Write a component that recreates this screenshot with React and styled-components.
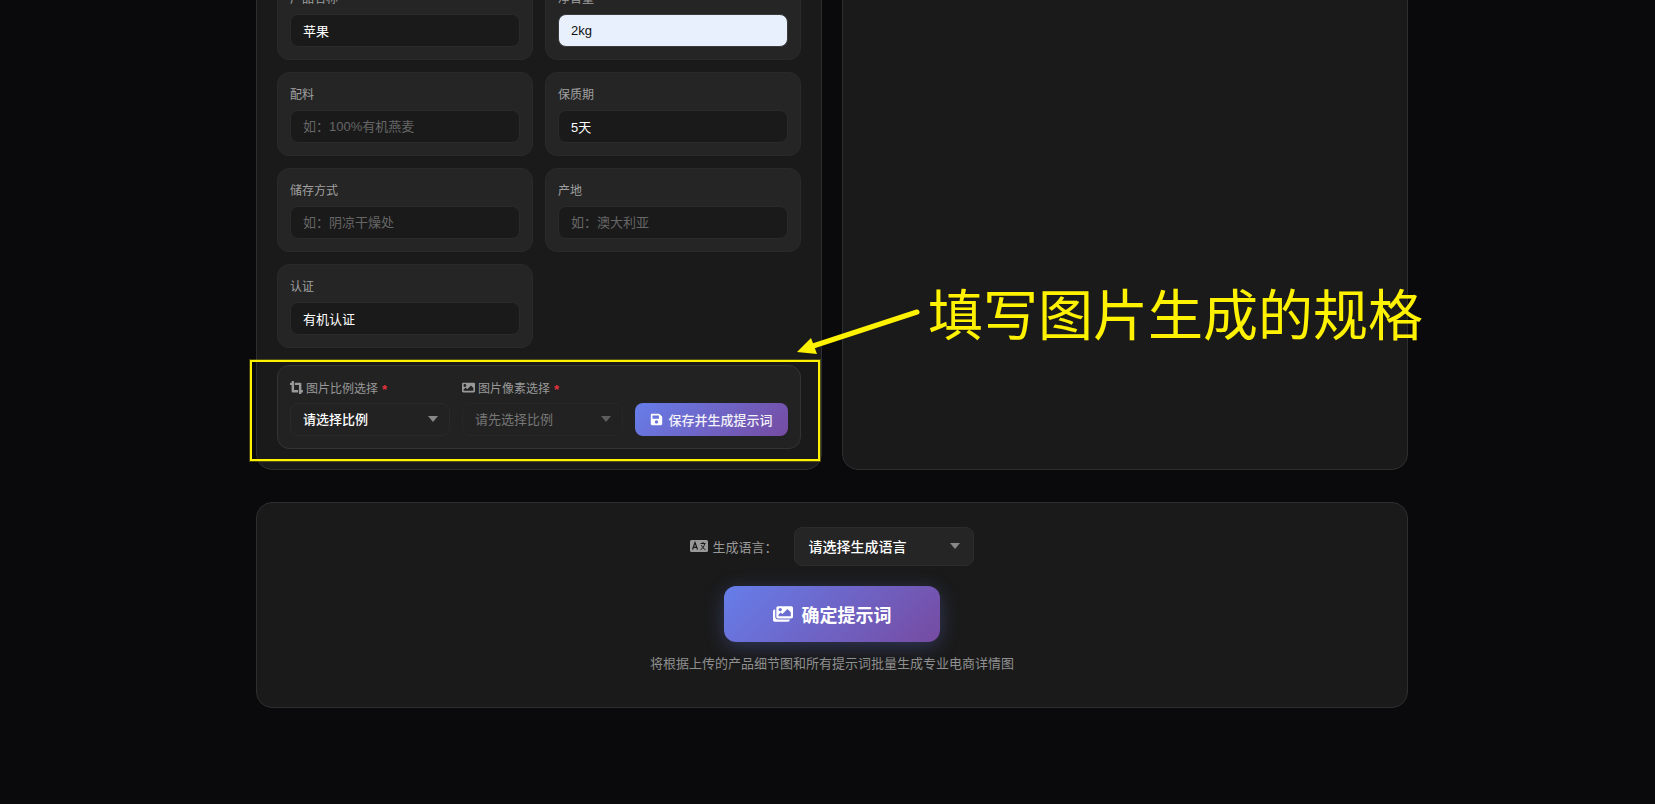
import React from "react";
import styled, { createGlobalStyle } from "styled-components";
import { FaCropAlt, FaImage, FaSave, FaImages } from "react-icons/fa";

const Global = createGlobalStyle`
  html, body { margin: 0; padding: 0; background: #0a0a0c; overflow: hidden; }
  * { box-sizing: border-box; text-spacing-trim: space-all; }
  body { font-family: "Liberation Sans", "Noto Sans CJK SC", sans-serif; }
`;

const Viewport = styled.div`
  position: relative;
  width: 1655px;
  height: 804px;
  overflow: hidden;
  background: #0a0a0c;
`;

const Container = styled.main`
  width: 1152px;
  margin: -45px 0 0 256px;
  display: flex;
  flex-direction: column;
  gap: 32px;
`;

const Columns = styled.div`
  display: grid;
  grid-template-columns: 566px 566px;
  gap: 20px;
`;

const Panel = styled.section`
  background: #1a1a1a;
  border: 1px solid #2e2e2e;
  border-radius: 16px;
  padding: 20px;
`;

const FieldGrid = styled.div`
  display: grid;
  grid-template-columns: 1fr 1fr;
  gap: 12px;
`;

const FieldCard = styled.div`
  height: 84px;
  background: #252525;
  border: 1px solid #2a2a2a;
  border-radius: 12px;
  padding: 12px;
`;

const FieldLabel = styled.label`
  display: block;
  height: 20px;
  line-height: 20px;
  font-size: 12px;
  color: #a0a0a0;
  margin-bottom: 5px;
`;

const Input = styled.input`
  display: block;
  width: 100%;
  height: 33px;
  border-radius: 8px;
  border: 1px solid ${(p) => (p.$filled ? "#3a3a3a" : "#2a2a2a")};
  background: ${(p) => (p.$filled ? "#e8f0fe" : "#1a1a1a")};
  color: ${(p) => (p.$filled ? "#111" : "#fff")};
  padding: 0 12px 1px;
  font: 13px "Liberation Sans", "Noto Sans CJK SC", sans-serif;
  outline: none;
  &::placeholder { color: #666; opacity: 1; }
`;

const SpecBox = styled.div`
  margin-top: 17px;
  height: 84px;
  background: #222;
  border: 1px solid #333;
  border-radius: 12px;
  padding: 12px;
  display: flex;
  align-items: flex-end;
  gap: 12px;
`;

const SpecField = styled.div`
  flex: ${(p) => p.$grow} 1 0;
  min-width: 0;
`;

const SpecLabel = styled.div`
  display: flex;
  align-items: center;
  gap: 3px;
  height: 18px;
  margin-bottom: 7px;
  font-size: 12px;
  color: #999;
  svg { font-size: 13px; flex: none; }
`;

const Required = styled.span`
  color: #e5323e;
  font-weight: 700;
  font-size: 13px;
  margin: 4px 0 0 1px;
`;

const Select = styled.div`
  display: flex;
  align-items: center;
  justify-content: space-between;
  height: ${(p) => (p.$large ? "39px" : "33px")};
  width: ${(p) => (p.$large ? "180px" : "auto")};
  padding-left: ${(p) => (p.$large ? "14px" : "12px")};
  padding-right: ${(p) => (p.$large ? "13px" : "11px")};
  padding-bottom: 2px;
  background: ${(p) => (p.$large ? "#252525" : "#222")};
  border: 1px solid ${(p) => (p.$disabled ? "#272727" : p.$large ? "#2c2c2c" : "#2a2a2a")};
  border-radius: 8px;
  font-size: ${(p) => (p.$large ? "14px" : "13px")};
  font-weight: ${(p) => (p.$disabled ? 400 : 500)};
  color: ${(p) => (p.$disabled ? "#777" : "#fff")};
`;

const Caret = styled.span`
  width: 0;
  height: 0;
  border-left: 5px solid transparent;
  border-right: 5px solid transparent;
  border-top: 6px solid ${(p) => (p.$dim ? "#5e5e5e" : "#888")};
`;

const SaveButton = styled.button`
  flex: none;
  width: 153px;
  height: 33px;
  border: 0;
  border-radius: 8px;
  background: linear-gradient(135deg, #667eea 0%, #764ba2 100%);
  color: #f2f2f8;
  font: 500 13px "Liberation Sans", "Noto Sans CJK SC", sans-serif;
  display: flex;
  align-items: center;
  justify-content: center;
  gap: 5px;
  padding: 0;
  svg { font-size: 13px; color: #fff; }
`;

const GeneratePanel = styled(Panel)`
  height: 206px;
  padding: 24px;
  display: flex;
  flex-direction: column;
  align-items: center;
`;

const LanguageRow = styled.div`
  display: flex;
  align-items: center;
  gap: 16px;
`;

const LanguageLabel = styled.div`
  display: flex;
  align-items: center;
  gap: 4px;
  padding-bottom: 1px;
  font-size: 13px;
  color: #999;
`;

const LanguageIcon = styled.svg`
  width: 18px;
  height: 12px;
  flex: none;
`;

const ConfirmButton = styled.button`
  margin-top: 20px;
  width: 216px;
  height: 56px;
  border: 0;
  border-radius: 12px;
  background: linear-gradient(135deg, #667eea 0%, #764ba2 100%);
  box-shadow: 0 4px 20px rgba(102, 126, 234, 0.3);
  color: #fff;
  font: 700 18px "Liberation Sans", "Noto Sans CJK SC", sans-serif;
  display: flex;
  align-items: center;
  justify-content: center;
  gap: 9px;
  padding: 0;
  svg { font-size: 20px; }
`;

const Hint = styled.p`
  margin: 12px 0 0;
  font-size: 13px;
  line-height: 20px;
  color: #8f8f8f;
`;

const FrameMark = styled.div`
  position: absolute;
  left: 250px;
  top: 360px;
  width: 570px;
  height: 101px;
  border: 2px solid #fff200;
  box-shadow: 0 0 0 1px rgba(255, 242, 0, 0.25);
  pointer-events: none;
`;

const ArrowMark = styled.svg`
  position: absolute;
  left: 780px;
  top: 300px;
  width: 150px;
  height: 70px;
  pointer-events: none;
`;

const CalloutText = styled.div`
  position: absolute;
  left: 928px;
  top: 271px;
  font-family: "Noto Sans CJK SC", sans-serif;
  font-size: 55px;
  line-height: 80px;
  color: #fff200;
  white-space: nowrap;
`;

const rows = [
  { label: "产品名称", value: "苹果" },
  { label: "净含量", value: "2kg", filled: true },
  { label: "配料", placeholder: "如：100%有机燕麦" },
  { label: "保质期", value: "5天" },
  { label: "储存方式", placeholder: "如：阴凉干燥处" },
  { label: "产地", placeholder: "如：澳大利亚" },
  { label: "认证", value: "有机认证" },
];

export default function App() {
  return (
    <Viewport>
      <Global />
      <Container>
        <Columns>
          <Panel>
            <FieldGrid>
              {rows.map((f) => (
                <FieldCard key={f.label}>
                  <FieldLabel>{f.label}</FieldLabel>
                  <Input
                    readOnly
                    $filled={f.filled}
                    value={f.value ?? ""}
                    placeholder={f.placeholder}
                  />
                </FieldCard>
              ))}
            </FieldGrid>
            <SpecBox>
              <SpecField $grow={160}>
                <SpecLabel>
                  <FaCropAlt />
                  图片比例选择<Required>*</Required>
                </SpecLabel>
                <Select>
                  请选择比例
                  <Caret />
                </Select>
              </SpecField>
              <SpecField $grow={161}>
                <SpecLabel>
                  <FaImage />
                  图片像素选择<Required>*</Required>
                </SpecLabel>
                <Select $disabled>
                  请先选择比例
                  <Caret $dim />
                </Select>
              </SpecField>
              <SaveButton>
                <FaSave />
                保存并生成提示词
              </SaveButton>
            </SpecBox>
          </Panel>
          <Panel />
        </Columns>
        <GeneratePanel>
          <LanguageRow>
            <LanguageLabel>
              <LanguageIcon viewBox="0 0 18 12">
                <rect x="0" y="0" width="18" height="12" rx="1.5" fill="#999" />
                <path d="M2.5 9.5 L5 2.5 L7.5 9.5 M3.5 7.3 H6.5" fill="none" stroke="#1a1a1a" strokeWidth="1.2" />
                <path d="M10.5 3.5 H15.5 M13 2 V3.5 M14.7 3.5 C14.2 6.5 12.5 8.6 10.5 9.7 M11.5 5.2 C12.2 7.2 13.6 8.8 15.5 9.7" fill="none" stroke="#1a1a1a" strokeWidth="1" />
              </LanguageIcon>
              生成语言：
            </LanguageLabel>
            <Select $large>
              请选择生成语言
              <Caret />
            </Select>
          </LanguageRow>
          <ConfirmButton>
            <FaImages />
            确定提示词
          </ConfirmButton>
          <Hint>将根据上传的产品细节图和所有提示词批量生成专业电商详情图</Hint>
        </GeneratePanel>
      </Container>
      <FrameMark />
      <ArrowMark viewBox="0 0 150 70">
        <line x1="137" y1="12" x2="30" y2="47" stroke="#fff200" strokeWidth="5" strokeLinecap="round" />
        <polygon points="17,52 37,54 31,38" fill="#fff200" />
      </ArrowMark>
      <CalloutText>填写图片生成的规格</CalloutText>
    </Viewport>
  );
}
